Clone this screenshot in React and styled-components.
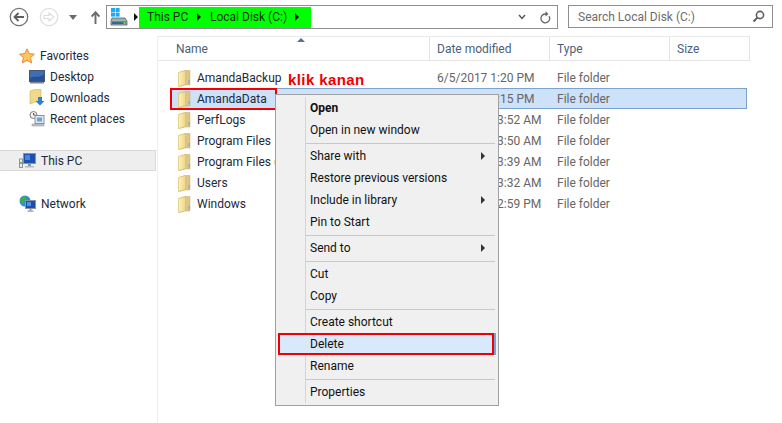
import React from "react";
import styled, { createGlobalStyle } from "styled-components";

const Global = createGlobalStyle`
  html, body { margin: 0; padding: 0; background: #fff; }
  body { font-family: Roboto, "Noto Sans", sans-serif; font-size: 12px; color: #1e1e1e; }
`;

const Page = styled.div`
  position: relative;
  width: 782px;
  height: 423px;
  overflow: hidden;
  background: #fff;
`;

const Toolbar = styled.div`
  display: flex;
  align-items: flex-start;
  height: 36px;
  padding-top: 5px;
  box-sizing: border-box;
`;

const NavButtons = styled.div`
  display: flex;
  align-items: center;
  width: 106px;
  height: 24px;
  padding-left: 9px;
  box-sizing: border-box;
`;

const NavIcon = styled.svg`
  display: block;
  flex: none;
  margin-right: ${(p) => p.$mr || 0}px;
`;

const AddressBox = styled.div`
  display: flex;
  align-items: center;
  width: 452px;
  height: 24px;
  box-sizing: border-box;
  border: 1px solid #8e8e8e;
  padding-left: 3px;
`;

const Crumbs = styled.div`
  display: flex;
  align-items: center;
  width: 172px;
  height: 21px;
  box-sizing: border-box;
  margin-left: 1px;
  padding-left: 8px;
  background: #00ff00;
  color: #173017;
  white-space: nowrap;
`;

const CrumbText = styled.span`
  width: ${(p) => p.$w}px;
  flex: none;
`;

const Tri = styled.span`
  display: inline-block;
  flex: none;
  width: 0;
  height: 0;
  border-left: 4px solid #111;
  border-top: 4px solid transparent;
  border-bottom: 4px solid transparent;
  margin: ${(p) => p.$m || 0};
`;

const Spacer = styled.div`
  flex: 1;
`;

const SearchBox = styled.div`
  display: flex;
  align-items: center;
  justify-content: space-between;
  margin-left: 10px;
  width: 205px;
  height: 23px;
  box-sizing: border-box;
  border: 1px solid #8e8e8e;
  padding: 0 7px 0 9px;
  color: #6d6d6d;
`;

const Body = styled.div`
  display: flex;
  height: 387px;
`;

const Sidebar = styled.nav`
  width: 158px;
  flex: none;
  padding-top: 9px;
  box-sizing: border-box;
  border-right: 1px solid #eeeeee;
`;

const NavRow = styled.div`
  display: flex;
  align-items: center;
  height: 21px;
  box-sizing: border-box;
  padding-left: ${(p) => (p.$child ? 29 : 19)}px;
  gap: 5px;
  margin-top: ${(p) => p.$mt || 0}px;
  width: 156px;
  white-space: nowrap;
  color: #1c2a3a;
  background: ${(p) => (p.$selected ? "#eeeeee" : "transparent")};
  border-top: ${(p) => (p.$selected ? "1px solid #d9d9d9" : "none")};
  border-bottom: ${(p) => (p.$selected ? "1px solid #d9d9d9" : "none")};
  border-right: ${(p) => (p.$selected ? "1px solid #d9d9d9" : "none")};
`;

const Main = styled.main`
  flex: 1;
  min-width: 0;
`;

const Header = styled.div`
  position: relative;
  display: grid;
  grid-template-columns: 272px 120px 120px 80px;
  width: 592px;
  height: 25px;
  box-sizing: border-box;
  border-top: 1px solid #eaeaea;
  border-bottom: 1px solid #e5e5e5;
  border-right: 1px solid #e5e5e5;
  color: #4c607a;
`;

const HeaderCell = styled.div`
  display: flex;
  align-items: center;
  padding-left: ${(p) => p.$pl || 7}px;
  border-right: ${(p) => (p.$last ? "none" : "1px solid #e5e5e5")};
`;

const SortCaret = styled.span`
  position: absolute;
  left: 139px;
  top: 1px;
  width: 0;
  height: 0;
  border-left: 4px solid transparent;
  border-right: 4px solid transparent;
  border-bottom: 4px solid #5a6f8c;
`;

const Rows = styled.div`
  padding: 6px 0 0 12px;
`;

const Row = styled.div`
  display: grid;
  grid-template-columns: 267px 120px 1fr;
  align-items: start;
  width: 577px;
  height: 21px;
  line-height: 21px;
  box-sizing: border-box;
  background: ${(p) => (p.$selected ? "#cde1f9" : "transparent")};
  box-shadow: ${(p) => (p.$selected ? "inset 0 0 0 1px #7da2ce" : "none")};
`;

const NameCell = styled.div`
  display: flex;
  align-items: center;
  justify-self: start;
  height: 22px;
  box-sizing: border-box;
  gap: 6px;
  padding: 1px ${(p) => (p.$marked ? 10 : 0)}px 0 7px;
  white-space: nowrap;
  outline: ${(p) => (p.$marked ? "2px solid #f00000" : "none")};
  outline-offset: -2px;
  color: #1c2a3a;
`;

const InfoCell = styled.div`
  padding-top: 1px;
  color: #666666;
  white-space: nowrap;
`;

const Note = styled.div`
  position: absolute;
  left: 288px;
  top: 70px;
  font-family: "Liberation Sans", Arial, sans-serif;
  font-size: 15px;
  font-weight: 700;
  line-height: 20px;
  letter-spacing: 0.4px;
  color: #f00000;
`;

const Menu = styled.div`
  position: absolute;
  left: 275px;
  top: 94px;
  width: 224px;
  height: 312px;
  box-sizing: border-box;
  padding: 2px;
  background: #f0f0f0;
  border: 1px solid #a0a0a0;
  &::before {
    content: "";
    position: absolute;
    left: 29px;
    top: 2px;
    bottom: 2px;
    width: 1px;
    background: #d4d4d4;
  }
`;

const MenuItem = styled.div`
  position: relative;
  display: flex;
  align-items: center;
  justify-content: space-between;
  height: 22px;
  box-sizing: border-box;
  padding: 0 11px 0 32px;
  font-weight: ${(p) => (p.$bold ? 700 : 400)};
  color: #101010;
  white-space: nowrap;
  ${(p) =>
    p.$hot
      ? `background:#d9e9fc; outline:2px solid #f00000; outline-offset:-2px; box-shadow: 2px 0 0 #6ea6dc; margin-right:2px;`
      : ""}
`;

const MenuSep = styled.div`
  height: 4px;
  margin-left: 28px;
  margin-right: 1px;
  display: flex;
  align-items: center;
  &::after {
    content: "";
    flex: 1;
    height: 1px;
    background: #c8c8c8;
  }
`;

const SubArrow = styled.span`
  width: 0;
  height: 0;
  border-left: 4px solid #333;
  border-top: 4px solid transparent;
  border-bottom: 4px solid transparent;
`;

const FolderIcon = styled.svg`
  display: block;
  flex: none;
  margin-left: 1px;
`;

const Folder = () => (
  <FolderIcon width="13" height="17" viewBox="0 0 13 17">
    <defs>
      <linearGradient id="fg" x1="0" x2="1" y1="0" y2="0">
        <stop offset="0" stopColor="#fbf3c0" />
        <stop offset="1" stopColor="#f0d680" />
      </linearGradient>
    </defs>
    <path d="M1 2.5 L7 .5 H12 V15 H7 L1 16.5 Z" fill="#dcc58a" stroke="#c9ac62" strokeWidth=".5" />
    <path d="M.5 2.5 L7.5 .5 V14.5 L.5 16.5 Z" fill="url(#fg)" stroke="#dcbd62" strokeWidth=".6" />
    <rect x="10.5" y="10" width="1.2" height="3.5" fill="#7fa8d6" />
  </FolderIcon>
);

const Star = () => (
  <svg width="16" height="16" viewBox="0 0 16 16">
    <path d="M8 .8 L10.2 5.6 L15.4 6.2 L11.5 9.6 L12.7 15 L8 12.2 L3.3 15 L4.5 9.6 L.6 6.2 L5.8 5.6 Z" fill="#fbc65c" stroke="#e8883a" strokeWidth="1" />
  </svg>
);

const Desktop = () => (
  <svg width="16" height="14" viewBox="0 0 16 14">
    <rect x=".5" y=".5" width="15" height="11" fill="#3d6fb8" stroke="#4a5568" />
    <path d="M1 8 C5 5 10 9 15 4 V11 H1 Z" fill="#2b4f93" />
    <rect x="1" y="12" width="14" height="1.5" fill="#7d8794" />
  </svg>
);

const Downloads = () => (
  <svg width="16" height="17" viewBox="0 0 16 17">
    <path d="M1 2 L6 0.5 H12 V13 H6 L1 15 Z" fill="#efd98a" stroke="#d4b14f" strokeWidth=".6" />
    <path d="M9 8 H13 V12 H15.5 L11 16.5 L6.5 12 H9 Z" fill="#2f7fd0" />
  </svg>
);

const Recent = () => (
  <svg width="16" height="16" viewBox="0 0 16 16">
    <circle cx="4.5" cy="4" r="3.5" fill="#f4f4f4" stroke="#7d7d7d" />
    <path d="M4.5 2 V4 H6.5" stroke="#555" fill="none" />
    <rect x="6" y="4.5" width="9" height="8" fill="#dfe7ef" stroke="#8a929c" />
    <rect x="8" y="6.5" width="5" height="4" fill="#6fa3d8" />
    <rect x="3" y="13" width="12" height="2" fill="#c0c5cb" stroke="#8a929c" strokeWidth=".5" />
  </svg>
);

const Pc = () => (
  <svg width="17" height="16" viewBox="0 0 17 16">
    <rect x=".5" y="6" width="3" height="8.5" fill="#e8ecef" stroke="#8b949c" />
    <rect x="1" y="9" width="2" height="2" fill="#6dbb3c" />
    <rect x="4.5" y=".5" width="12" height="10" fill="#1f4fae" stroke="#8b949c" />
    <rect x="6" y="2" width="5" height="5" fill="#3d8be0" />
    <rect x="9" y="11" width="3" height="2" fill="#8b949c" />
    <rect x="6" y="13" width="9" height="1.5" fill="#b5bcc3" />
  </svg>
);

const Network = () => (
  <svg width="17" height="17" viewBox="0 0 17 17">
    <circle cx="6" cy="6" r="5.5" fill="#2f8fd8" />
    <path d="M2 3 L6 1 L8 3 L5 6 L6 9 L3 9 L1 6 Z" fill="#3fae49" />
    <rect x="6.5" y="5.5" width="10" height="8" fill="#1f4fae" stroke="#8b949c" />
    <rect x="8" y="7" width="4" height="4" fill="#4b93e6" />
    <rect x="10.5" y="13.5" width="2" height="2" fill="#8b949c" />
    <rect x="8.5" y="15.5" width="6" height="1.2" fill="#8b949c" />
  </svg>
);

const Drive = () => (
  <NavIcon width="18" height="18" viewBox="0 0 18 18">
    <rect x="1" y="0" width="4" height="4" fill="#1eaaf0" />
    <rect x="5.6" y="0" width="4" height="4" fill="#1eaaf0" />
    <rect x="1" y="4.6" width="4" height="4" fill="#1eaaf0" />
    <rect x="5.6" y="4.6" width="4" height="4" fill="#1eaaf0" />
    <path d="M2 10 H15 L17 13 V17 H1 V13 Z" fill="#a3b0b5" stroke="#52616a" strokeWidth=".8" />
    <rect x="2" y="13.5" width="14" height="2.5" fill="#2f6f82" />
    <rect x="13.5" y="14" width="2" height="2" fill="#7ad13b" />
  </NavIcon>
);

const BackIcon = () => (
  <NavIcon width="20" height="20" viewBox="0 0 20 20" $mr={10}>
    <circle cx="10" cy="10" r="8.7" fill="#fff" stroke="#737373" strokeWidth="1.3" />
    <path d="M15 10 H6 M9.5 6 L5.5 10 L9.5 14" fill="none" stroke="#5f5f5f" strokeWidth="1.8" />
  </NavIcon>
);

const ForwardIcon = () => (
  <NavIcon width="20" height="20" viewBox="0 0 20 20" $mr={10}>
    <circle cx="10" cy="10" r="8.7" fill="#fff" stroke="#dfdfdf" strokeWidth="1.3" />
    <path d="M5 8.5 H10 V6 L15 10 L10 14 V11.5 H5 Z" fill="none" stroke="#dcdcdc" strokeWidth="1.1" />
  </NavIcon>
);

const DropCaret = () => (
  <NavIcon width="8" height="5" viewBox="0 0 8 5" $mr={14}>
    <path d="M0 0 H8 L4 5 Z" fill="#6b6b6b" />
  </NavIcon>
);

const UpIcon = () => (
  <NavIcon width="9" height="13" viewBox="0 0 9 13">
    <path d="M4.5 13 V2 M.6 5.6 L4.5 1.3 L8.4 5.6" fill="none" stroke="#6b6b6b" strokeWidth="1.9" />
  </NavIcon>
);

const Chevron = () => (
  <NavIcon width="8" height="6" viewBox="0 0 8 6" $mr={13}>
    <path d="M1 1 L4 4.5 L7 1" fill="none" stroke="#555" strokeWidth="1.4" />
  </NavIcon>
);

const Refresh = () => (
  <NavIcon width="12" height="13" viewBox="0 0 12 13" $mr={6}>
    <path d="M10 5 A4.4 4.4 0 1 1 6 3 H7" fill="none" stroke="#666" strokeWidth="1.3" />
    <path d="M6.5 .3 L9.5 3 L6.5 5.5 Z" fill="#666" />
  </NavIcon>
);

const Magnifier = () => (
  <NavIcon width="13" height="13" viewBox="0 0 13 13">
    <circle cx="8" cy="5" r="3.6" fill="none" stroke="#5f5f5f" strokeWidth="1.6" />
    <path d="M5.4 7.6 L1.5 11.5" stroke="#5f5f5f" strokeWidth="2" />
  </NavIcon>
);

const files = [
  { name: "AmandaBackup", date: "6/5/2017 1:20 PM" },
  { name: "AmandaData", date: "6/5/2017 1:15 PM", selected: true },
  { name: "PerfLogs", date: "8/22/2013 3:52 AM" },
  { name: "Program Files", date: "8/22/2013 3:50 AM" },
  { name: "Program Files (x86)", date: "8/22/2013 3:39 AM" },
  { name: "Users", date: "8/22/2013 3:32 AM" },
  { name: "Windows", date: "8/22/2013 2:59 PM" },
];

const menu = [
  { label: "Open", bold: true },
  { label: "Open in new window" },
  "sep",
  { label: "Share with", sub: true },
  { label: "Restore previous versions" },
  { label: "Include in library", sub: true },
  { label: "Pin to Start" },
  "sep",
  { label: "Send to", sub: true },
  "sep",
  { label: "Cut" },
  { label: "Copy" },
  "sep",
  { label: "Create shortcut" },
  { label: "Delete", hot: true },
  { label: "Rename" },
  "sep",
  { label: "Properties" },
];

export default function App() {
  return (
    <Page>
      <Global />
      <Toolbar>
        <NavButtons>
          <BackIcon />
          <ForwardIcon />
          <DropCaret />
          <UpIcon />
        </NavButtons>
        <AddressBox>
          <Drive />
          <Tri $m="0 0 0 6px" />
          <Crumbs>
            <CrumbText $w={50}>This PC</CrumbText>
            <Tri $m="0 9px 0 0" />
            <CrumbText $w={85}>Local Disk (C:)</CrumbText>
            <Tri />
          </Crumbs>
          <Spacer />
          <Chevron />
          <Refresh />
        </AddressBox>
        <SearchBox>
          <span>Search Local Disk (C:)</span>
          <Magnifier />
        </SearchBox>
      </Toolbar>
      <Body>
        <Sidebar>
          <NavRow><Star /><span>Favorites</span></NavRow>
          <NavRow $child><Desktop /><span>Desktop</span></NavRow>
          <NavRow $child><Downloads /><span>Downloads</span></NavRow>
          <NavRow $child><Recent /><span>Recent places</span></NavRow>
          <NavRow $selected $mt={21}><Pc /><span>This PC</span></NavRow>
          <NavRow $mt={22}><Network /><span>Network</span></NavRow>
        </Sidebar>
        <Main>
          <Header>
            <HeaderCell $pl={18}>Name</HeaderCell>
            <HeaderCell>Date modified</HeaderCell>
            <HeaderCell>Type</HeaderCell>
            <HeaderCell $last>Size</HeaderCell>
            <SortCaret />
          </Header>
          <Rows>
            {files.map((f) => (
              <Row key={f.name} $selected={f.selected}>
                <NameCell $marked={f.selected}>
                  <Folder />
                  <span>{f.name}</span>
                </NameCell>
                <InfoCell>{f.date}</InfoCell>
                <InfoCell>File folder</InfoCell>
              </Row>
            ))}
          </Rows>
        </Main>
      </Body>
      <Note>klik kanan</Note>
      <Menu>
        {menu.map((m, i) =>
          m === "sep" ? (
            <MenuSep key={i} />
          ) : (
            <MenuItem key={m.label} $bold={m.bold} $hot={m.hot}>
              <span>{m.label}</span>
              {m.sub && <SubArrow />}
            </MenuItem>
          )
        )}
      </Menu>
    </Page>
  );
}
